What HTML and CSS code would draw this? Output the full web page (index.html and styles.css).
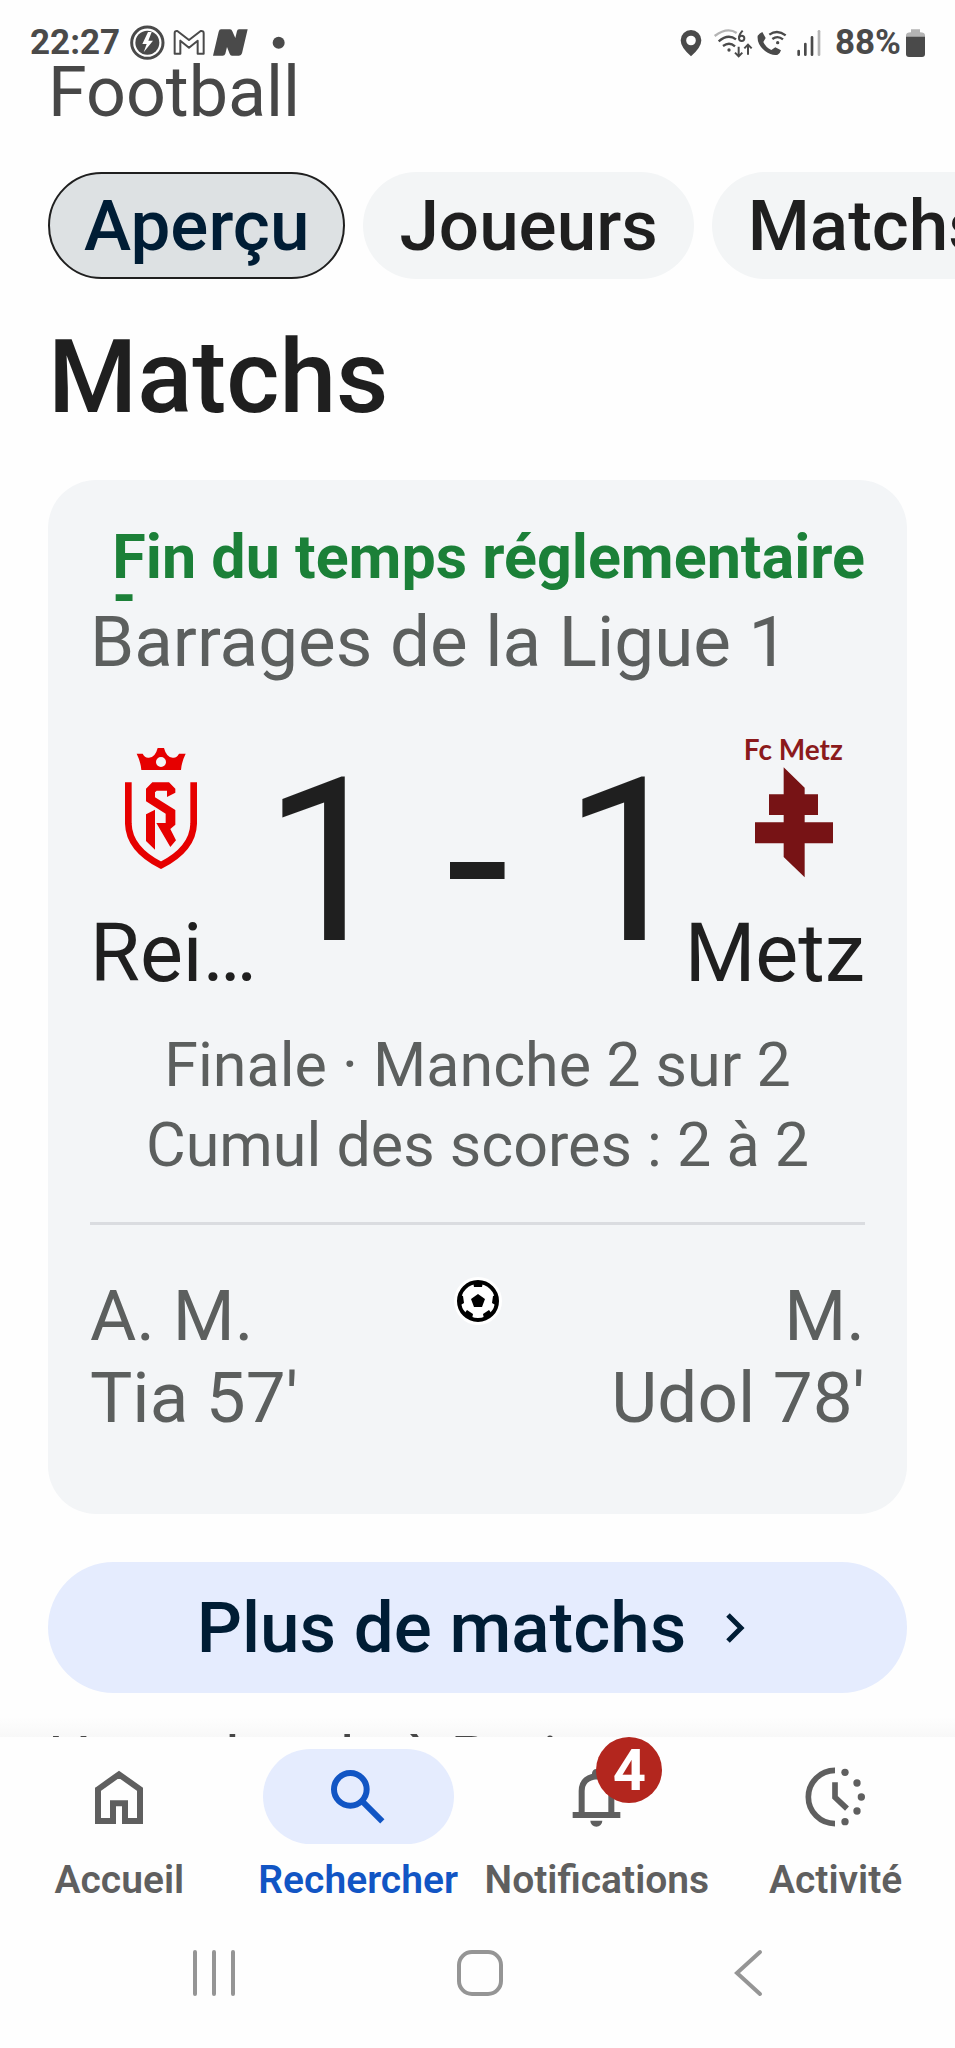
FILE: index.html
```html
<!DOCTYPE html>
<html lang="fr">
<head>
<meta charset="utf-8">
<meta name="viewport" content="width=device-width, initial-scale=1">
<title>Football</title>
<link rel="stylesheet" href="styles.css">
</head>
<body>
<header class="status">
  <div class="status-left">
    <span class="time">22:27</span>
    <svg width="35" height="35" viewBox="387 75 105 105" aria-hidden="true">
      <circle cx="439" cy="128" r="47" fill="#fff" stroke="#4a4a4a" stroke-width="9"/>
      <circle cx="439" cy="128" r="36" fill="#4a4a4a"/>
      <path d="M441 96l-17 36h13l-9 25 28-35h-14l10-26z" fill="#fff"/>
    </svg>
    <svg class="mail" width="32" height="35" viewBox="514 75 96 105" aria-hidden="true">
      <path d="M519 161V99q0-7 8-6l35 27 35-27q9-1 9 6v62h-18v-39l-26 21-26-21v39z" fill="none" stroke="#4a4a4a" stroke-width="6" stroke-linejoin="round"/>
    </svg>
    <svg class="news" width="35" height="35" viewBox="637 75 105 105" aria-hidden="true">
      <path d="M661 88h27q5 0 7 6l9 20 5-21q1-5 6-5h26l-17 72q-2 7-9 7h-21q-5 0-7-6l-8-20-5 20q-2 6-8 6h-29l17-72q2-7 7-7z" fill="#4a4a4a"/>
    </svg>
    <svg class="more" width="13" height="35" viewBox="811 75 39 105" aria-hidden="true"><circle cx="831" cy="128" r="18" fill="#4a4a4a"/></svg>
  </div>
  <div class="status-right">
    <svg width="22" height="35" viewBox="619 75 66 105" aria-hidden="true">
      <path fill-rule="evenodd" d="M652 169q-31-27-31-48a31 31 0 0 1 62 0q0 21-31 48zM652 107a14 14 0 1 0 0 29 14 14 0 0 0 0-29z" fill="#4a4a4a"/>
    </svg>
    <svg class="wifi" width="38" height="35" viewBox="722 75 114 105" aria-hidden="true">
      <g fill="none" stroke="#4a4a4a" stroke-width="7">
        <path d="M724 108q38-28 66-9" stroke="#b4b4b4"/>
        <path d="M736 124q28-24 52-6"/><path d="M749 138q19-14 36 1"/>
        <path d="M808 92q-11 12-11 21" stroke-width="6"/><circle cx="805" cy="115" r="8" stroke-width="6"/>
        <path d="M796 140v26M785 158l11 11 11-11M824 164v-28M813 145l11-11 11 11" stroke-width="6"/>
      </g><circle cx="767" cy="150" r="5" fill="#4a4a4a"/>
    </svg>
    <svg class="call" width="30" height="35" viewBox="852 75 90 105" aria-hidden="true">
      <path d="M854 107q6-8 14-11l10 18-7 12q7 16 24 24l12-8 17 9q-2 8-10 13-17 4-38-11-25-19-22-46z" fill="#4a4a4a"/>
      <path d="M889 104q24-17 49 2M898 117q16-12 32 1" fill="none" stroke="#4a4a4a" stroke-width="7"/><circle cx="914" cy="128" r="5" fill="#4a4a4a"/>
    </svg>
    <svg class="signal" width="24" height="35" viewBox="971 75 72 105" aria-hidden="true">
      <g stroke="#4a4a4a" stroke-width="8" stroke-linecap="round"><path d="M976 153v11M996 132v32M1016 112v52"/><path d="M1037 94v70" stroke="#b4b4b4"/></g>
    </svg>
    <span class="charge">88%</span>
    <svg class="battery" width="19" height="35" viewBox="1293 75 57 105" aria-hidden="true">
      <path d="M1308 88h27v9q15 0 15 9v5h-57v-5q0-9 15-9z" fill="#b4b4b4"/><path d="M1293 110h57v52q0 9-9 9h-39q-9 0-9-9z" fill="#4a4a4a"/>
    </svg>
  </div>
</header>

<main class="content">
  <p class="subject">Football</p>
  <div class="chips">
    <button class="chip chip-active" type="button">Aperçu</button>
    <button class="chip" type="button">Joueurs</button>
    <button class="chip" type="button">Matchs</button>
  </div>
  <h1 class="title">Matchs</h1>

  <section class="card">
    <p class="state"><span>Fin du temps réglementaire<br>-</span></p>
    <p class="league">Barrages de la Ligue 1</p>
    <div class="match">
      <div class="team">
        <svg width="144" height="144" viewBox="30 108 432 432" role="img" aria-label="Stade de Reims">
          <path fill-rule="evenodd" d="M170 161h18q7 14 19 12 19-1 26-29h19q7 28 26 29 12 2 19-12h20q-12 24-14 49H184q-2-25-14-49zM243 171a15 15 0 1 0 0 30 15 15 0 0 0 0-30z" fill="#e60000"/>
          <path d="M145 247v124q2 76 98 125 96-49 98-125V247" fill="none" stroke="#e60000" stroke-width="20"/>
          <path d="M217 247h50l19 19v12l-25 13v-19h-31l-5 5v15l61 38v44l-15 13 17 34-17 20-42-72h28v-28l-59-37v-38zM198 343l27-14v120l-27-26z" fill="#e60000"/>
        </svg>
        <span class="team-name">Rei…</span>
      </div>
      <div class="score"><span>1</span><span>-</span><span>1</span></div>
      <div class="team team-away">
        <svg width="144" height="144" viewBox="723 108 432 432" role="img" aria-label="FC Metz">
          <text class="crest-text" x="940" y="180" text-anchor="middle">Fc Metz</text>
          <path d="M911 202l63 61v20h40v62h-40v22h85v63h-85v102l-63-61v-41h-86v-63h86v-22h-44v-62h44z" fill="#771315"/>
        </svg>
        <span class="team-name">Metz</span>
      </div>
    </div>
    <p class="details">Finale · Manche 2 sur 2<br>Cumul des scores : 2 à 2</p>
    <hr class="rule">
    <div class="scorers">
      <p>A. M.<br>Tia 57'</p>
      <svg class="ball" width="48" height="48" viewBox="0 0 48 48" role="img" aria-label="But">
        <circle cx="24" cy="24" r="24" fill="#fff"/><circle cx="24" cy="24" r="19" fill="#fff" stroke="#000" stroke-width="4"/>
        <path d="M24 17l7 5-3 8h-8l-3-8zM19 5h10l-1 5h-8zM5 18l4 1 1 7-5 3zM43 18l-4 1-1 7 5 3zM10 37l3-4 6 4-1 5zM38 37l-3-4-6 4 1 5z" fill="#000"/>
      </svg>
      <p class="away-goals">M.<br>Udol 78'</p>
    </div>
  </section>

  <button class="more-matches" type="button">Plus de matchs
    <svg width="20" height="32" viewBox="0 0 20 32" aria-hidden="true"><path d="M2 3l13 13L2 29" fill="none" stroke="#001d35" stroke-width="5"/></svg>
  </button>
  <p class="local-time">Heure locale à Paris</p>
</main>

<nav class="tabs">
  <a class="tab" href="#accueil">
    <span class="tab-icon"><svg width="60" height="60" viewBox="267 709 180 180" aria-hidden="true"><path d="M294 776l63-45 63 45v95h-45v-53h-36v53h-45z" fill="none" stroke="#5f5f5f" stroke-width="18"/></svg></span>
    <span class="tab-label">Accueil</span>
  </a>
  <a class="tab tab-active" href="#rechercher" aria-current="page">
    <span class="tab-icon"><svg width="60" height="60" viewBox="984 709 180 180" aria-hidden="true"><g fill="none" stroke="#1155c4" stroke-width="18"><circle cx="1051" cy="776" r="49"/><path d="M1087 812l60 60"/></g></svg></span>
    <span class="tab-label">Rechercher</span>
  </a>
  <a class="tab" href="#notifications">
    <span class="tab-icon"><svg width="60" height="60" viewBox="276 709 180 180" aria-hidden="true"><path d="M320 847v-66q0-39 44-44 45 5 45 44v66M293 853h143" fill="none" stroke="#5f5f5f" stroke-width="18"/><path d="M351 738v-10a13 13 0 0 1 26 0v10zM346 870h36a18 18 0 0 1-36 0z" fill="#5f5f5f"/></svg>
      <span class="badge">4</span></span>
    <span class="tab-label">Notifications</span>
  </a>
  <a class="tab" href="#activite">
    <span class="tab-icon"><svg width="60" height="60" viewBox="993 709 180 180" aria-hidden="true"><path d="M1080 719a80 80 0 0 0 0 160M1080 755v45l36 34" fill="none" stroke="#5f5f5f" stroke-width="17"/><g fill="#5f5f5f"><circle cx="1110" cy="725" r="11"/><circle cx="1146" cy="757" r="11"/><circle cx="1159" cy="799" r="11"/><circle cx="1146" cy="841" r="11"/><circle cx="1110" cy="873" r="11"/></g></svg></span>
    <span class="tab-label">Activité</span>
  </a>
</nav>

<footer class="system">
  <button class="system-key" type="button" aria-label="Applications récentes"><svg width="48" height="48" viewBox="0 0 48 48"><path d="M5 3v42M24 3v42M43 3v42" stroke="#959595" stroke-width="4" stroke-linecap="round"/></svg></button>
  <button class="system-key" type="button" aria-label="Accueil du téléphone"><svg width="48" height="48" viewBox="0 0 48 48"><rect x="3" y="3" width="42" height="42" rx="13" fill="none" stroke="#959595" stroke-width="4"/></svg></button>
  <button class="system-key" type="button" aria-label="Retour"><svg width="48" height="48" viewBox="0 0 48 48"><path d="M38 3L15 24l23 21" fill="none" stroke="#959595" stroke-width="4" stroke-linecap="round"/></svg></button>
</footer>
</body>
</html>
```
FILE: styles.css
```css
* { box-sizing: border-box; }

body {
  margin: 0;
  height: 100vh;
  display: flex;
  flex-direction: column;
  overflow: hidden;
  background: #fefefe;
  color: #1f1f1f;
  font-family: Roboto, "Liberation Sans", sans-serif;
}

p, h1 { margin: 0; }
svg { display: block; flex: none; overflow: visible; }
button { font-family: inherit; border: 0; }

.status {
  flex: none;
  display: flex;
  justify-content: space-between;
  padding: 25px 30px 0;
  color: #4a4a4a;
  font-size: 35px;
  font-weight: 700;
  line-height: 35px;
}
.status-left, .status-right { display: flex; align-items: center; }
.time { margin-right: 10px; }
.mail { margin-left: 8px; }
.news { margin-left: 8px; }
.more { margin-left: 24px; }
.wifi { margin-left: 12px; }
.call { margin-left: 5px; }
.signal { margin-left: 10px; }
.charge { margin-left: 14px; }
.battery { margin-left: 5px; }

.content {
  flex: 1;
  min-height: 0;
  overflow: hidden;
  padding: 0 48px;
  background: linear-gradient(#fefefe, #f8f8f8) bottom / 100% 20px no-repeat;
}
.subject {
  color: #474747;
  font-size: 70px;
  line-height: 64px;
}
.chips {
  display: flex;
  gap: 18px;
  margin: 48px -48px 0 0;
  overflow: hidden;
}
.chip {
  flex: none;
  height: 107px;
  padding: 0 36px;
  border-radius: 54px;
  background: #f3f5f6;
  color: #1f1f1f;
  font-size: 71px;
  font-weight: 500;
}
.chip-active {
  padding: 0 34px;
  border: 2px solid #1f1f1f;
  background: #dde1e3;
  color: #001d35;
}
.title {
  margin-top: 38px;
  font-size: 102px;
  font-weight: 500;
  line-height: 120px;
}

.card {
  margin-top: 43px;
  padding: 58px 42px 75px;
  border-radius: 48px;
  background: #f3f5f7;
}
.state {
  display: flex;
  justify-content: flex-end;
  color: #1b8038;
  font-size: 61px;
  font-weight: 700;
  line-height: 38px;
  white-space: nowrap;
}
.league {
  color: #5c5f5e;
  font-size: 71px;
  line-height: 56px;
}
.match {
  display: grid;
  grid-template-columns: minmax(0, 1fr) auto minmax(0, 1fr);
  margin-top: 66px;
}
.team {
  display: flex;
  flex-direction: column;
  align-items: flex-start;
  gap: 26px;
}
.team-away { align-items: flex-end; }
.team-name {
  font-size: 81px;
  line-height: 96px;
  white-space: nowrap;
}
.crest-text {
  fill: #8b1a1c;
  font-family: Lato, sans-serif;
  font-size: 84px;
  font-weight: 700;
}
.score {
  display: flex;
  gap: 54px;
  padding-top: 6px;
  font-size: 229px;
  line-height: 240px;
}
.details {
  margin-top: 23px;
  color: #5c5f5e;
  font-size: 61px;
  line-height: 80px;
  text-align: center;
}
.rule {
  height: 3px;
  margin: 37px 0 50px;
  border: 0;
  background: #dadce0;
}
.scorers {
  display: grid;
  grid-template-columns: 1fr auto 1fr;
  color: #5c5f5e;
  font-size: 71px;
  line-height: 82px;
}
.ball { margin-top: 2px; }
.away-goals { text-align: right; }

.more-matches {
  display: flex;
  align-items: center;
  justify-content: center;
  gap: 40px;
  width: 100%;
  height: 131px;
  margin-top: 48px;
  padding: 0 42px 0 30px;
  border-radius: 66px;
  background: #e5ecfe;
  color: #001d35;
  font-size: 71px;
  font-weight: 500;
}
.local-time {
  margin-top: 26px;
  color: #474747;
  font-size: 61px;
  line-height: 80px;
}

.tabs {
  flex: none;
  display: grid;
  grid-template-columns: repeat(4, minmax(0, 1fr));
  padding-top: 12px;
  background: #fefefe;
}
.tab {
  display: flex;
  flex-direction: column;
  align-items: center;
  gap: 14px;
  color: #5f5f5f;
  text-decoration: none;
}
.tab-icon {
  position: relative;
  display: flex;
  align-items: center;
  justify-content: center;
  width: 191px;
  height: 95px;
  border-radius: 48px;
}
.tab-label {
  font-size: 39px;
  font-weight: 600;
  line-height: 44px;
}
.tab-active { color: #1155c4; }
.tab-active .tab-icon { background: #e5ecfe; }
.badge {
  position: absolute;
  top: -12px;
  left: 95px;
  width: 66px;
  height: 66px;
  border-radius: 50%;
  background: #b3261e;
  color: #fff;
  font-size: 58px;
  font-weight: 700;
  line-height: 66px;
  text-align: center;
}

.system {
  flex: none;
  display: flex;
  justify-content: center;
  padding: 0 0 4px 5px;
  background: #fefefe;
}
.system-key {
  display: flex;
  align-items: center;
  justify-content: center;
  width: 28%;
  height: 142px;
  padding: 0;
  background: none;
}
```
